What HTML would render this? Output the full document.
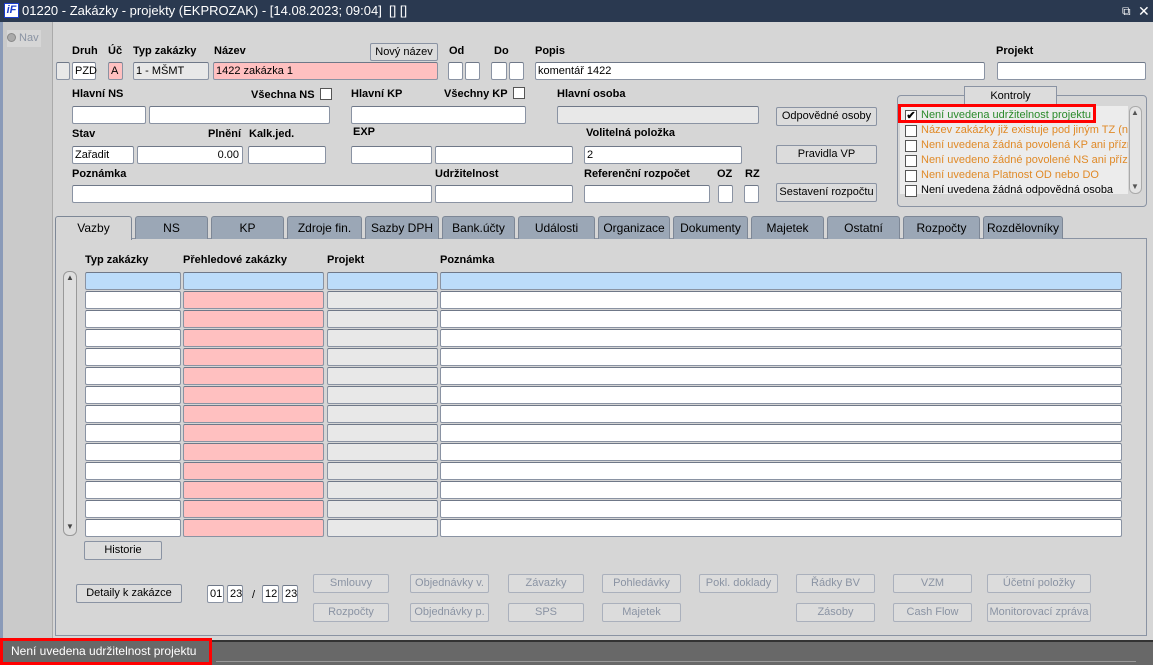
<!DOCTYPE html><html><head><meta charset="utf-8"><style>
*{box-sizing:border-box;margin:0;padding:0}
body{width:1153px;height:665px;position:relative;background:#d6d6d6;font-family:"Liberation Sans",sans-serif;font-size:11px;color:#000;overflow:hidden}
.a{position:absolute}
.l{position:absolute;font-weight:bold;font-size:11px}
.f{position:absolute;background:#fff;border:1px solid #8a93a3;border-top-color:#6f7888;height:18px;font-size:11px;line-height:16px;padding-left:2px;border-radius:2px}
.g{background:#e8e8e8}
.p{background:#ffc0c0}
.b{position:absolute;background:#dcdcdc;border:1px solid #8a93a3;border-radius:2px;height:19px;text-align:center;line-height:17px;font-size:11px}
.d{color:#8a93a3;border-color:#aab0bc}
.t{position:absolute;top:216px;height:23px;background:#9ba7b6;border:1px solid #7d8796;border-bottom:none;border-radius:3px 3px 0 0;text-align:center;line-height:22px;font-size:12px}
.cb{position:absolute;width:12px;height:12px;background:#fff;border:1px solid #555}
.k{position:absolute;left:905px;font-size:11px}
</style></head><body>
<div class="a" style="left:0;top:0;width:1153px;height:22px;background:#2a3950;color:#fff;font-size:13px;line-height:22px">
<span class="a" style="left:4px;top:3px;width:15px;height:15px;background:#fff;border:1px solid #1a3ccc;color:#1a3ccc;font-weight:bold;font-style:italic;font-size:11px;line-height:13px;text-align:center">iF</span>
<span class="a" style="left:22px;top:0">01220 - Zakázky - projekty (EKPROZAK) - [14.08.2023; 09:04]&nbsp; [] []</span>
<span class="a" style="left:1122px;top:0;font-size:12px">⧉</span><span class="a" style="left:1138px;top:0;font-size:14px">✕</span></div>
<div class="a" style="left:0;top:22px;width:3px;height:618px;background:#8a9ab8"></div>
<div class="a" style="left:3px;top:22px;width:50px;height:618px;background:#cacaca;border-right:1px solid #aaa"></div>
<div class="a" style="left:7px;top:30px;width:34px;height:17px;background:#d6d6d6;color:#8a93a3;font-size:11px;line-height:17px;white-space:nowrap"><span style="display:inline-block;width:9px;height:9px;border-radius:50%;background:#aaa;border:1px solid #888;vertical-align:-1px"></span> Nav</div>

<div class="l" style="left:72px;top:45px">Druh</div><div class="l" style="left:108px;top:45px">Úč</div><div class="l" style="left:133px;top:45px">Typ zakázky</div><div class="l" style="left:214px;top:45px">Název</div>
<div class="b" style="left:370px;top:43px;width:68px;height:18px;line-height:16px">Nový název</div>
<div class="l" style="left:449px;top:45px">Od</div><div class="l" style="left:494px;top:45px">Do</div><div class="l" style="left:535px;top:45px">Popis</div><div class="l" style="left:996px;top:45px">Projekt</div>
<div class="f g" style="left:56px;top:62px;width:14px"></div>
<div class="f" style="left:72px;top:62px;width:24px">PZD</div>
<div class="f p" style="left:108px;top:62px;width:15px">A</div>
<div class="f g" style="left:133px;top:62px;width:76px">1 - MŠMT</div>
<div class="f p" style="left:213px;top:62px;width:225px">1422 zakázka 1</div>
<div class="f" style="left:448px;top:62px;width:15px"></div><div class="f" style="left:465px;top:62px;width:15px"></div>
<div class="f" style="left:491px;top:62px;width:16px"></div><div class="f" style="left:509px;top:62px;width:15px"></div>
<div class="f" style="left:535px;top:62px;width:450px">komentář 1422</div>
<div class="f" style="left:997px;top:62px;width:149px"></div>

<div class="l" style="left:72px;top:88px">Hlavní NS</div><div class="l" style="left:251px;top:89px">Všechna NS</div><div class="cb" style="left:320px;top:88px"></div>
<div class="l" style="left:351px;top:88px">Hlavní KP</div><div class="l" style="left:444px;top:88px">Všechny KP</div><div class="cb" style="left:513px;top:87px"></div>
<div class="l" style="left:557px;top:88px">Hlavní osoba</div>
<div class="f" style="left:72px;top:106px;width:74px"></div><div class="f" style="left:149px;top:106px;width:181px"></div>
<div class="f" style="left:351px;top:106px;width:175px"></div>
<div class="f g" style="left:557px;top:106px;width:202px"></div>
<div class="b" style="left:776px;top:107px;width:101px">Odpovědné osoby</div>

<div class="l" style="left:72px;top:128px">Stav</div><div class="l" style="left:208px;top:128px">Plnění</div><div class="l" style="left:249px;top:128px">Kalk.jed.</div>
<div class="l" style="left:353px;top:126px">EXP</div><div class="l" style="left:586px;top:127px">Volitelná položka</div>
<div class="f" style="left:72px;top:146px;width:62px">Zařadit</div>
<div class="f" style="left:137px;top:146px;width:106px;text-align:right;padding-right:3px">0.00</div>
<div class="f" style="left:248px;top:146px;width:78px"></div>
<div class="f" style="left:351px;top:146px;width:81px"></div><div class="f" style="left:435px;top:146px;width:138px"></div>
<div class="f" style="left:584px;top:146px;width:158px">2</div>
<div class="b" style="left:776px;top:145px;width:101px">Pravidla VP</div>

<div class="l" style="left:72px;top:168px">Poznámka</div><div class="l" style="left:435px;top:168px">Udržitelnost</div>
<div class="l" style="left:584px;top:168px">Referenční rozpočet</div><div class="l" style="left:717px;top:168px">OZ</div><div class="l" style="left:745px;top:168px">RZ</div>
<div class="f" style="left:72px;top:185px;width:360px"></div><div class="f" style="left:435px;top:185px;width:138px"></div>
<div class="f" style="left:584px;top:185px;width:126px"></div><div class="f" style="left:718px;top:185px;width:15px"></div><div class="f" style="left:744px;top:185px;width:15px"></div>
<div class="b" style="left:776px;top:183px;width:101px">Sestavení rozpočtu</div>

<div class="a" style="left:897px;top:95px;width:250px;height:112px;border:1px solid #8a93a3;border-radius:4px"></div>
<div class="a" style="left:964px;top:86px;width:93px;height:18px;background:#dcdcdc;border:1px solid #8a93a3;border-bottom:none;text-align:center;line-height:18px">Kontroly</div>
<div class="a" style="left:900px;top:106px;width:228px;height:88px;background:#ececec"></div>
<div class="a" style="left:1129px;top:106px;width:13px;height:88px;background:#e4e4e4;border:1px solid #aaa;border-radius:6px"></div>
<div class="a" style="left:1131px;top:108px;font-size:8px;color:#555">▲</div><div class="a" style="left:1131px;top:182px;font-size:8px;color:#555">▼</div>
<div class="cb" style="left:905px;top:110px;text-align:center;font-size:11px;line-height:10px;font-weight:bold">✔</div>
<div class="k" style="left:921px;top:109px;color:#2a8a2a">Není uvedena udržitelnost projektu</div>
<div class="a" style="left:898px;top:104px;width:198px;height:19px;border:3px solid #f00"></div>
<div class="cb" style="left:905px;top:125px"></div><div class="k" style="left:921px;top:124px;color:#e08a28;width:207px;overflow:hidden;white-space:nowrap">Název zakázky již existuje pod jiným TZ (na</div>
<div class="cb" style="left:905px;top:140px"></div><div class="k" style="left:921px;top:139px;color:#e08a28;width:207px;overflow:hidden;white-space:nowrap">Není uvedena žádná povolená KP ani přízn</div>
<div class="cb" style="left:905px;top:155px"></div><div class="k" style="left:921px;top:154px;color:#e08a28;width:207px;overflow:hidden;white-space:nowrap">Není uvedeno žádné povolené NS ani přízn</div>
<div class="cb" style="left:905px;top:170px"></div><div class="k" style="left:921px;top:169px;color:#e08a28">Není uvedena Platnost OD nebo DO</div>
<div class="cb" style="left:905px;top:185px"></div><div class="k" style="left:921px;top:184px">Není uvedena žádná odpovědná osoba</div>

<div class="a" style="left:55px;top:238px;width:1092px;height:311px;border:1px solid #8a93a3;background:#d6d6d6"></div>
<div class="a" style="left:55px;top:548px;width:1092px;height:88px;border:1px solid #8a93a3;border-top:none;background:#d6d6d6"></div>
<div class="t" style="left:55px;width:77px;background:#d6d6d6;height:24px">Vazby</div>
<div class="t" style="left:135px;width:73px">NS</div><div class="t" style="left:211px;width:73px">KP</div><div class="t" style="left:287px;width:75px">Zdroje fin.</div>
<div class="t" style="left:365px;width:74px">Sazby DPH</div><div class="t" style="left:442px;width:73px">Bank.účty</div><div class="t" style="left:518px;width:77px">Události</div>
<div class="t" style="left:598px;width:72px">Organizace</div><div class="t" style="left:673px;width:75px">Dokumenty</div><div class="t" style="left:751px;width:73px">Majetek</div>
<div class="t" style="left:827px;width:73px">Ostatní</div><div class="t" style="left:903px;width:77px">Rozpočty</div><div class="t" style="left:983px;width:80px">Rozdělovníky</div>

<div class="l" style="left:85px;top:254px">Typ zakázky</div><div class="l" style="left:183px;top:254px">Přehledové zakázky</div><div class="l" style="left:327px;top:254px">Projekt</div><div class="l" style="left:440px;top:254px">Poznámka</div>
<div class="a" style="left:63px;top:271px;width:14px;height:265px;background:#dedede;border:1px solid #999;border-radius:6px"></div>
<div class="a" style="left:66px;top:273px;font-size:8px;color:#444">▲</div><div class="a" style="left:66px;top:522px;font-size:8px;color:#444">▼</div>
<div id="g"></div>
<script>
var h='';for(var i=0;i<14;i++){var y=272+i*19,c=i==0?'#bcdcfa':'';h+='<div class="f" style="left:85px;top:'+y+'px;width:96px;height:18px;'+(c?'background:'+c:'')+'"></div><div class="f '+(i?'p':'')+'" style="left:183px;top:'+y+'px;width:141px;height:18px;'+(c?'background:'+c:'')+'"></div><div class="f '+(i?'g':'')+'" style="left:327px;top:'+y+'px;width:111px;height:18px;'+(c?'background:'+c:'')+'"></div><div class="f" style="left:440px;top:'+y+'px;width:682px;height:18px;'+(c?'background:'+c:'')+'"></div>';}
document.getElementById('g').innerHTML=h;
</script>
<div class="b" style="left:84px;top:541px;width:78px">Historie</div>

<div class="b" style="left:76px;top:584px;width:106px">Detaily k zakázce</div>
<div class="f" style="left:207px;top:585px;width:17px">01</div><div class="f" style="left:227px;top:585px;width:16px">23</div>
<div class="a" style="left:252px;top:589px;font-size:11px">/</div>
<div class="f" style="left:262px;top:585px;width:17px">12</div><div class="f" style="left:282px;top:585px;width:16px">23</div>
<div class="b d" style="left:313px;top:574px;width:76px">Smlouvy</div><div class="b d" style="left:410px;top:574px;width:79px">Objednávky v.</div>
<div class="b d" style="left:508px;top:574px;width:76px">Závazky</div><div class="b d" style="left:602px;top:574px;width:79px">Pohledávky</div>
<div class="b d" style="left:699px;top:574px;width:79px">Pokl. doklady</div><div class="b d" style="left:796px;top:574px;width:79px">Řádky BV</div>
<div class="b d" style="left:893px;top:574px;width:79px">VZM</div><div class="b d" style="left:987px;top:574px;width:104px">Účetní položky</div>
<div class="b d" style="left:313px;top:603px;width:76px">Rozpočty</div><div class="b d" style="left:410px;top:603px;width:79px">Objednávky p.</div>
<div class="b d" style="left:508px;top:603px;width:76px">SPS</div><div class="b d" style="left:602px;top:603px;width:79px">Majetek</div>
<div class="b d" style="left:796px;top:603px;width:79px">Zásoby</div><div class="b d" style="left:893px;top:603px;width:79px">Cash Flow</div>
<div class="b d" style="left:987px;top:603px;width:104px">Monitorovací zpráva</div>

<div class="a" style="left:0;top:640px;width:1153px;height:25px;background:#686868;border-top:2px solid #333"></div>
<div class="a" style="left:216px;top:642px;width:920px;height:20px;border-bottom:1px solid #999"></div>
<div class="a" style="left:0;top:638px;width:212px;height:27px;border:3px solid #f00;background:#686868;color:#fff;font-size:12px;line-height:21px;padding-left:8px">Není uvedena udržitelnost projektu</div>
</body></html>
